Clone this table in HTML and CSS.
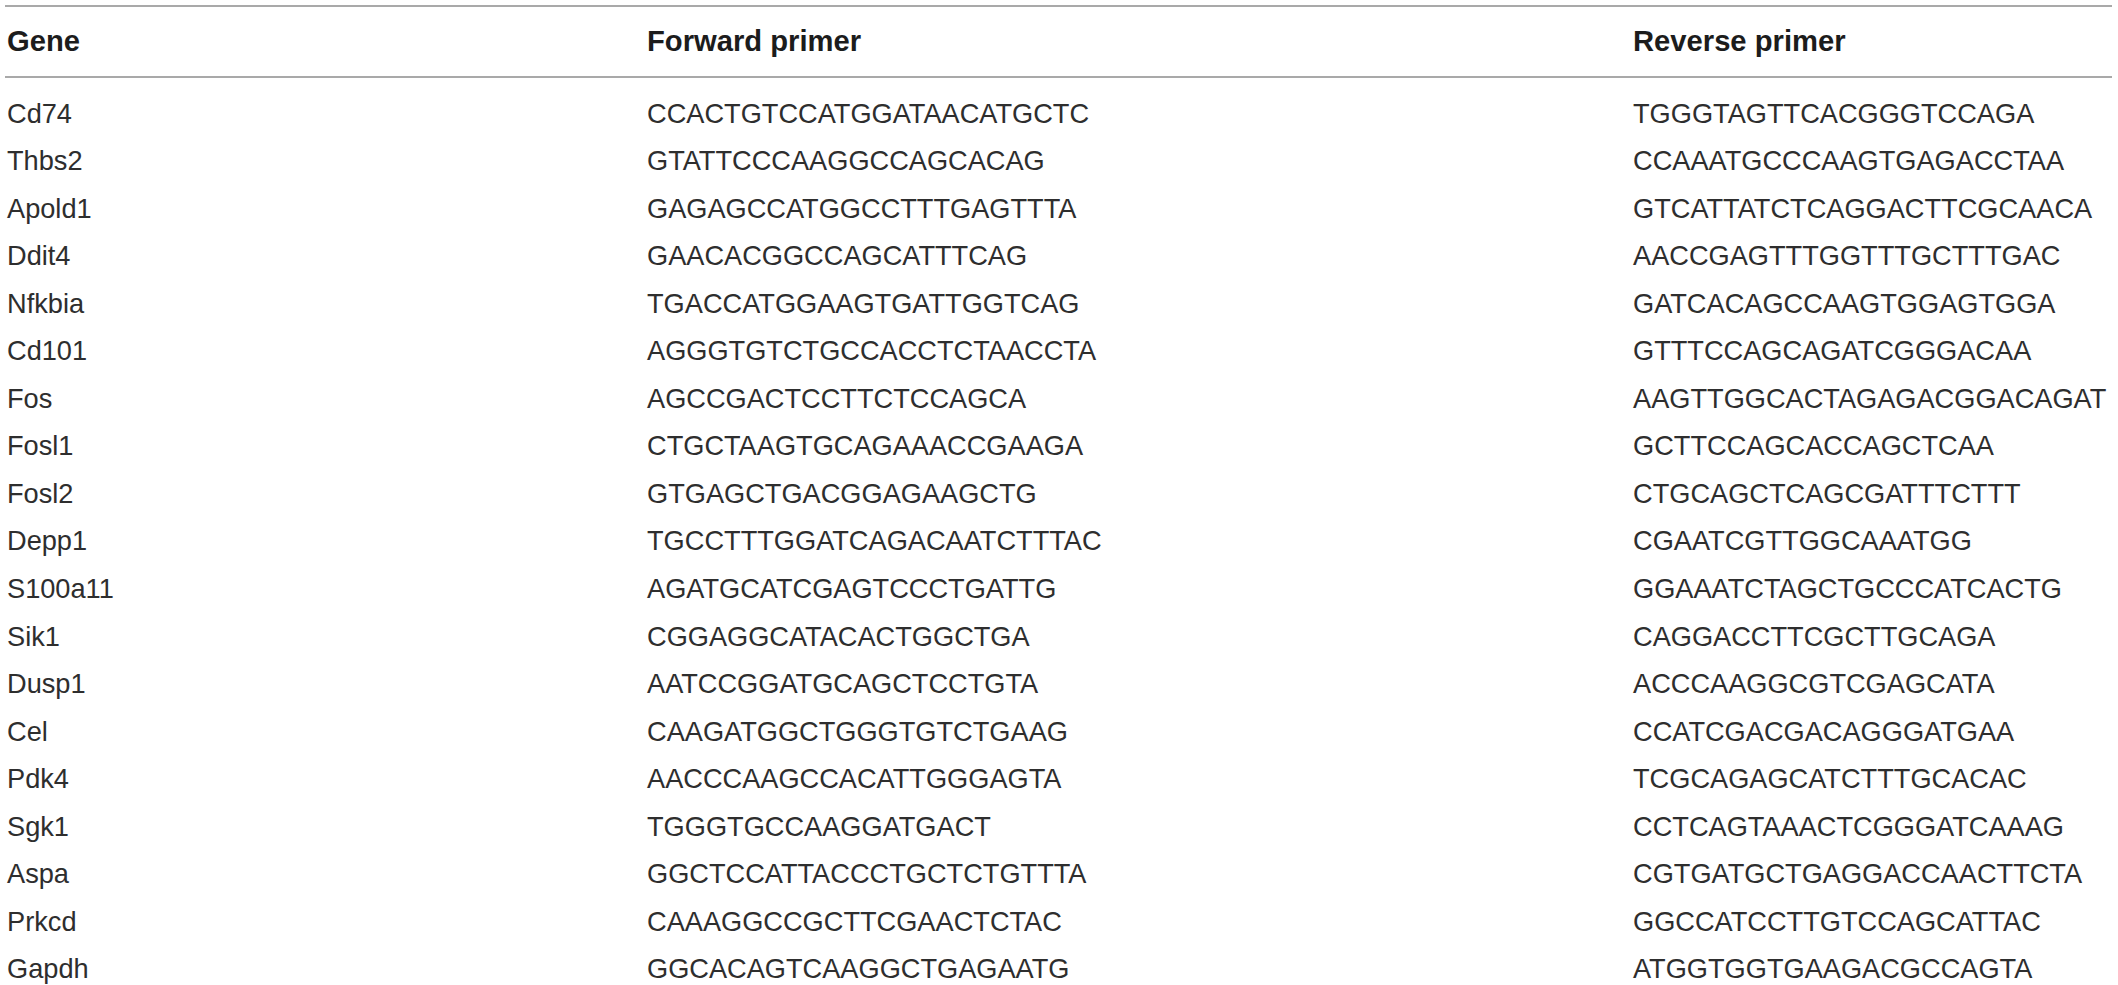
FILE: index.html
```html
<!DOCTYPE html>
<html>
<head>
<meta charset="utf-8">
<link rel="stylesheet" href="styles.css">
</head>
<body>
<div class="sheet">
  <div class="table">
    <div class="row head">
      <div class="cell">Gene</div>
      <div class="cell">Forward primer</div>
      <div class="cell">Reverse primer</div>
    </div>
    <div class="body">
      <div class="row"><div class="cell">Cd74</div><div class="cell">CCACTGTCCATGGATAACATGCTC</div><div class="cell">TGGGTAGTTCACGGGTCCAGA</div></div>
      <div class="row"><div class="cell">Thbs2</div><div class="cell">GTATTCCCAAGGCCAGCACAG</div><div class="cell">CCAAATGCCCAAGTGAGACCTAA</div></div>
      <div class="row"><div class="cell">Apold1</div><div class="cell">GAGAGCCATGGCCTTTGAGTTTA</div><div class="cell">GTCATTATCTCAGGACTTCGCAACA</div></div>
      <div class="row"><div class="cell">Ddit4</div><div class="cell">GAACACGGCCAGCATTTCAG</div><div class="cell">AACCGAGTTTGGTTTGCTTTGAC</div></div>
      <div class="row"><div class="cell">Nfkbia</div><div class="cell">TGACCATGGAAGTGATTGGTCAG</div><div class="cell">GATCACAGCCAAGTGGAGTGGA</div></div>
      <div class="row"><div class="cell">Cd101</div><div class="cell">AGGGTGTCTGCCACCTCTAACCTA</div><div class="cell">GTTTCCAGCAGATCGGGACAA</div></div>
      <div class="row"><div class="cell">Fos</div><div class="cell">AGCCGACTCCTTCTCCAGCA</div><div class="cell">AAGTTGGCACTAGAGACGGACAGAT</div></div>
      <div class="row"><div class="cell">Fosl1</div><div class="cell">CTGCTAAGTGCAGAAACCGAAGA</div><div class="cell">GCTTCCAGCACCAGCTCAA</div></div>
      <div class="row"><div class="cell">Fosl2</div><div class="cell">GTGAGCTGACGGAGAAGCTG</div><div class="cell">CTGCAGCTCAGCGATTTCTTT</div></div>
      <div class="row"><div class="cell">Depp1</div><div class="cell">TGCCTTTGGATCAGACAATCTTTAC</div><div class="cell">CGAATCGTTGGCAAATGG</div></div>
      <div class="row"><div class="cell">S100a11</div><div class="cell">AGATGCATCGAGTCCCTGATTG</div><div class="cell">GGAAATCTAGCTGCCCATCACTG</div></div>
      <div class="row"><div class="cell">Sik1</div><div class="cell">CGGAGGCATACACTGGCTGA</div><div class="cell">CAGGACCTTCGCTTGCAGA</div></div>
      <div class="row"><div class="cell">Dusp1</div><div class="cell">AATCCGGATGCAGCTCCTGTA</div><div class="cell">ACCCAAGGCGTCGAGCATA</div></div>
      <div class="row"><div class="cell">Cel</div><div class="cell">CAAGATGGCTGGGTGTCTGAAG</div><div class="cell">CCATCGACGACAGGGATGAA</div></div>
      <div class="row"><div class="cell">Pdk4</div><div class="cell">AACCCAAGCCACATTGGGAGTA</div><div class="cell">TCGCAGAGCATCTTTGCACAC</div></div>
      <div class="row"><div class="cell">Sgk1</div><div class="cell">TGGGTGCCAAGGATGACT</div><div class="cell">CCTCAGTAAACTCGGGATCAAAG</div></div>
      <div class="row"><div class="cell">Aspa</div><div class="cell">GGCTCCATTACCCTGCTCTGTTTA</div><div class="cell">CGTGATGCTGAGGACCAACTTCTA</div></div>
      <div class="row"><div class="cell">Prkcd</div><div class="cell">CAAAGGCCGCTTCGAACTCTAC</div><div class="cell">GGCCATCCTTGTCCAGCATTAC</div></div>
      <div class="row"><div class="cell">Gapdh</div><div class="cell">GGCACAGTCAAGGCTGAGAATG</div><div class="cell">ATGGTGGTGAAGACGCCAGTA</div></div>
    </div>
  </div>
</div>
</body>
</html>
```
FILE: styles.css
```css
html, body {
  margin: 0;
  padding: 0;
  background: #ffffff;
}

.sheet {
  padding: 5px 6px 0 5px;
  font-family: "Liberation Sans", Arial, sans-serif;
  color: #2e2e2e;
}

.table {
  border-top: 2px solid #a9a9a9;
}

.row {
  display: grid;
  grid-template-columns: 640px 986px 1fr;
}

.cell {
  padding-left: 2px;
  white-space: nowrap;
}

.head {
  height: 69px;
  align-items: center;
  border-bottom: 2px solid #a9a9a9;
  font-weight: bold;
  font-size: 29.2px;
  color: #1c1c1c;
}

.body {
  padding-top: 11.5px;
}

.body .row {
  height: 47.55px;
  line-height: 47.55px;
  font-size: 27.2px;
}
```
